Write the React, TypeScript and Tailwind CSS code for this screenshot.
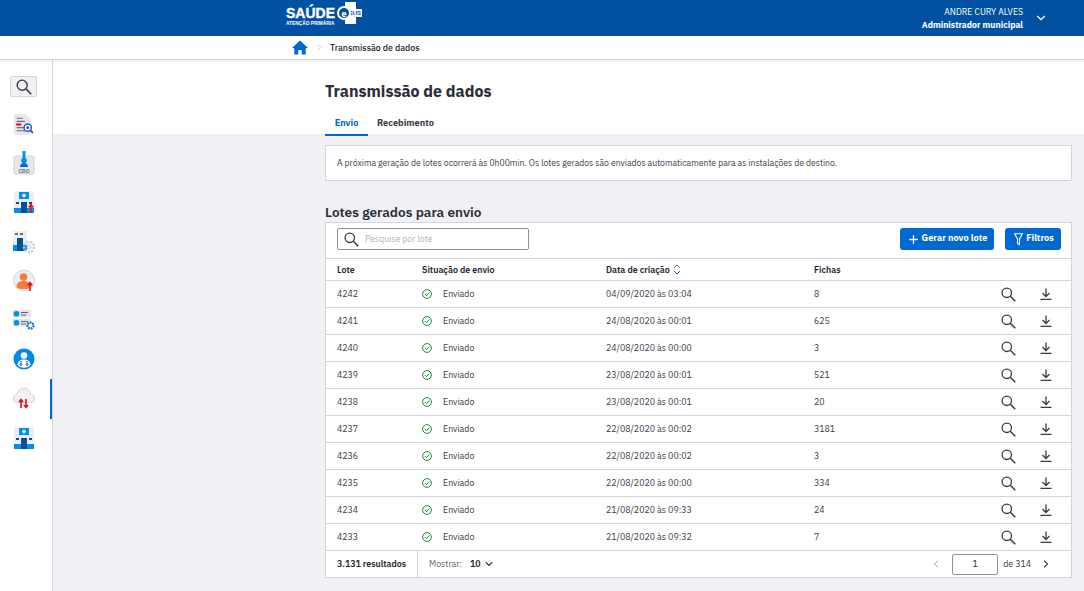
import { ChevronDown, ChevronLeft, ChevronRight, Plus } from 'lucide-react';
import type { ReactNode } from 'react';

const rows = [
  ['4242', '04/09/2020 às 03:04', '8'],
  ['4241', '24/08/2020 às 00:01', '625'],
  ['4240', '24/08/2020 às 00:00', '3'],
  ['4239', '23/08/2020 às 00:01', '521'],
  ['4238', '23/08/2020 às 00:01', '20'],
  ['4237', '22/08/2020 às 00:02', '3181'],
  ['4236', '22/08/2020 às 00:02', '3'],
  ['4235', '22/08/2020 às 00:00', '334'],
  ['4234', '21/08/2020 às 09:33', '24'],
  ['4233', '21/08/2020 às 09:32', '7'],
];

const Magnifier = ({ size = 15 }: { size?: number }) => (
  <svg width={size} height={size} viewBox="0 0 15 15" fill="none" stroke="#3a3b47">
    <circle cx="5.800" cy="5.800" r="4.700" strokeWidth="1.300" />
    <path d="m9.300 9.300 5 5" strokeWidth="1.500" />
  </svg>
);

const DownloadBar = () => (
  <svg width="12" height="12" viewBox="0 0 12 12" fill="none" stroke="#3a3b47" strokeWidth="1.300">
    <path d="M6 .5v7.500M2.500 5 6 8.500 9.500 5M.5 11.300h11" />
  </svg>
);

const Building = ({ arrow }: { arrow?: boolean }) => (
  <svg width="22" height="24" viewBox="0 0 22 24">
    <rect x="1" y="1" width="20" height="22" rx="1" fill="#eceef2" />
    <rect x="6" y="2" width="10" height="7" fill="#0090e8" />
    <path d="M11 3.500v4M9 5.500h4" stroke="#fff" strokeWidth="1.400" />
    <rect x="1" y="18" width="20" height="5" fill="#0090e8" />
    <rect x="8" y="12" width="6" height="11" fill="#0a4f96" />
    <rect x="3" y="12" width="3" height="2" fill="#0a4f96" />
    <rect x="16" y="12" width="3" height="2" fill="#0a4f96" />
    {arrow && <path d="M18 23v-8M15.800 17.500 18 14.500l2.200 3" stroke="#e0101c" strokeWidth="1.600" fill="none" />}
  </svg>
);

const sideIcons: ReactNode[] = [
  <svg key="doc" width="21" height="23" viewBox="0 0 20 22">
    <path d="M1 1h11l5 5v15H1z" fill="#e6e7ec" />
    <path d="M3.500 5h6M3.500 8h8M3.500 14h8M3.500 17h8" stroke="#6b6f7a" strokeWidth="1" />
    <rect x="3" y="10" width="5" height="2" fill="#e0101c" />
    <circle cx="14" cy="14" r="3.500" fill="#fff" stroke="#0069d0" strokeWidth="1.400" />
    <path d="m16.500 16.500 2.500 2.500" stroke="#0a4f96" strokeWidth="1.600" />
    <circle cx="14" cy="14" r="1.300" fill="#e0101c" />
  </svg>,
  <svg key="cbo" width="22" height="24" viewBox="0 0 22 24">
    <rect x="1" y="5" width="20" height="18" rx="2" fill="#e6e7ec" stroke="#d3d4dd" />
    <rect x="9.500" y="0" width="3" height="7" fill="#0090e8" />
    <circle cx="11" cy="9.500" r="2.800" fill="#0090e8" />
    <path d="M7 16c0-2.500 1.800-4 4-4s4 1.500 4 4z" fill="#0069d0" />
    <text x="11" y="21.500" textAnchor="middle" fontSize="5" fontWeight="700" fill="#6b6f7a" fontFamily="Liberation Sans, sans-serif">CBO</text>
  </svg>,
  <Building key="b1" arrow />,
  <svg key="b2" width="24" height="24" viewBox="0 0 24 24">
    <rect x="1" y="1" width="14" height="20" fill="#eceef2" />
    <rect x="3" y="3" width="3" height="2" fill="#6b6f7a" />
    <rect x="8" y="3" width="3" height="2" fill="#6b6f7a" />
    <rect x="1" y="15" width="14" height="6" fill="#0090e8" />
    <rect x="5" y="8" width="6" height="13" fill="#0a4f96" />
    <circle cx="17" cy="17" r="5" fill="none" stroke="#c9cbd4" strokeWidth="2.400" strokeDasharray="2 1.400" />
    <circle cx="17" cy="17" r="2" fill="#fff" stroke="#c9cbd4" />
  </svg>,
  <svg key="user" width="22" height="23" viewBox="0 0 22 23">
    <circle cx="11" cy="11.500" r="10.500" fill="#eceef2" stroke="#d3d4dd" />
    <circle cx="10.500" cy="8" r="3.800" fill="#f47c3c" />
    <path d="M3.500 18c0-4 3-6 7-6s7 2 7 6c-2 3-12 3-14 0z" fill="#f47c3c" />
    <path d="M17 22v-8M14.800 16.500 17 13.500l2.200 3" stroke="#e0101c" strokeWidth="1.600" fill="none" />
  </svg>,
  <svg key="cfg" width="22" height="20" viewBox="0 0 22 20">
    <rect x="0" y="0" width="18" height="7.500" rx="1" fill="#e3e4ea" />
    <rect x="0" y="9" width="18" height="7.500" rx="1" fill="#e3e4ea" />
    <circle cx="3.500" cy="3.700" r="2.800" fill="#0090e8" />
    <circle cx="3.500" cy="12.700" r="2.800" fill="#0090e8" />
    <path d="M8 2.500h7M8 5h5M8 11.500h7M8 14h5" stroke="#5f6370" strokeWidth="1" />
    <circle cx="17.500" cy="15.500" r="3" fill="#fff" stroke="#0069d0" strokeWidth="2.200" strokeDasharray="1.800 .8" />
  </svg>,
  <svg key="dr" width="22" height="22" viewBox="0 0 22 22">
    <circle cx="11" cy="11" r="10.500" fill="#0088ea" />
    <circle cx="11" cy="7.500" r="3.300" fill="#fff" />
    <path d="M4.500 17c0-4 3-5.500 6.500-5.500s6.500 1.500 6.500 5.500c-2.500 3.500-10.500 3.500-13 0z" fill="#fff" />
    <path d="M8 13v2.500M14 13v2.500" stroke="#0a4f96" strokeWidth="1" />
    <circle cx="8" cy="16.500" r="1" fill="none" stroke="#0a4f96" strokeWidth=".8" />
    <circle cx="14" cy="16.500" r="1" fill="none" stroke="#0a4f96" strokeWidth=".8" />
  </svg>,
  <svg key="cloud" width="22" height="22" viewBox="0 0 22 22">
    <path d="M5 15.500C2 15.500.5 13.500.5 11.500S2 8 4 7.800C4.500 3.500 7.500 1 11 1s6 2.500 6.500 6c2.500.3 4 2.300 4 4.500 0 2.300-1.500 4-4 4z" fill="#f0f0f5" stroke="#d3d4dd" />
    <path d="M8 21v-8M6 15l2-2.500L10 15M13 12v8M11 18l2 2.500 2-2.500" stroke="#e0101c" strokeWidth="1.600" fill="none" />
  </svg>,
  <Building key="b3" />,
];

const Logo = () => (
  <div className="mt-[2px] flex items-start self-start">
    <div className="mt-[4px] flex w-[47px] flex-col items-start text-white">
      <span className="font-['Liberation_Sans',sans-serif] text-[14px] leading-[14px] font-bold [-webkit-text-stroke:0.4px_white]">SAÚDE</span>
      <span className="font-['Liberation_Sans',sans-serif] text-[4.800px] leading-[7px] font-bold whitespace-nowrap">ATENÇÃO PRIMÁRIA</span>
    </div>
    <div className="relative ml-[4px] h-[22px] w-[25px]">
      <div className="absolute top-0 left-[8px] h-[22px] w-[11px] bg-white" />
      <div className="absolute top-[7px] left-[8px] flex h-[8px] w-[17px] items-center justify-end bg-white pr-[1px] font-['Liberation_Sans',sans-serif] text-[6px] leading-none font-bold text-[#0051a2]">SUS</div>
      <div className="absolute top-[4px] left-0 flex h-[14px] w-[14px] items-center justify-center rounded-full border-2 border-white bg-[#0051a2] text-[9px] leading-none font-bold text-white">e</div>
    </div>
  </div>
);

const App = () => {
  return (
    <div className="flex h-[591px] w-[1084px] flex-col overflow-hidden bg-white font-['IBM_Plex_Sans','Noto_Sans',sans-serif] text-[#24252e]">
      <header className="flex h-[36px] shrink-0 items-center bg-[#0051a2] pr-[36px] pl-[286px] text-white">
        <Logo />
        <div className="ml-auto flex flex-col items-end text-[8.700px] leading-[13px]">
          <span>ANDRE CURY ALVES</span>
          <span className="font-bold">Administrador municipal</span>
        </div>
        <ChevronDown className="ml-[11px] h-[14px] w-[14px]" strokeWidth={2} />
      </header>

      <nav className="z-10 flex h-[24px] shrink-0 items-center border-b border-[#d3d4dd] bg-white pl-[292px] shadow-[0_1px_2px_rgba(0,0,0,0.08)]">
        <svg width="16" height="15" viewBox="0 0 16 15" fill="#0069d0">
          <path d="M8 .5 0 8h2.300v6.500h4V10h3.400v4.500h4V8H16z" />
        </svg>
        <ChevronRight className="ml-[7px] h-[9px] w-[9px] text-[#b9bac6]" strokeWidth={2} />
        <span className="ml-[6px] text-[8.800px] font-medium text-[#24252e]">Transmissão de dados</span>
      </nav>

      <div className="flex min-h-0 flex-1">
        <aside className="flex w-[53px] shrink-0 flex-col items-center border-r border-[#d3d4dd] bg-white pt-[16px] pr-[5px]">
          <div className="mb-[7.500px] flex h-[21px] w-[27px] items-center justify-center rounded-[2px] border border-[#d3d4dd] bg-[#f0f0f5]">
            <Magnifier size={16} />
          </div>
          {sideIcons.map((icon, i) => (
            <div key={i} className="relative flex h-[39.200px] w-full items-center justify-center">
              {icon}
              {i === 7 && <span className="absolute top-0 right-[-5px] h-[40px] w-[2px] bg-[#0069d0]" />}
            </div>
          ))}
        </aside>

        <main className="min-w-0 flex-1 bg-[#f0f0f5]">
          <div className="h-[74px] bg-white pt-[21px] pl-[272px]">
            <h1 className="text-[16px] leading-[20px] font-bold text-[#2b2c36]">Transmissão de dados</h1>
            <div className="mt-[12px] flex text-[9.200px] leading-[21px] font-bold">
              <span className="w-[43px] border-b-2 border-[#0069d0] text-center text-[#0069d0]">Envio</span>
              <span className="ml-[9px] text-[#3a3b47]">Recebimento</span>
            </div>
          </div>

          <div className="pr-[12px] pl-[272px]">
            <div className="mt-[11px] flex h-[36px] items-center border border-[#d3d4dd] bg-white pl-[11px] text-[8.650px] text-[#3a3b47]">
              A próxima geração de lotes ocorrerá às 0h00min. Os lotes gerados são enviados automaticamente para as instalações de destino.
            </div>

            <h2 className="mt-[21px] text-[13.600px] leading-[20px] font-semibold text-[#2b2c36]">Lotes gerados para envio</h2>

            <section className="border border-[#d3d4dd] bg-white">
              <div className="flex h-[36px] items-center justify-between border-b border-[#d3d4dd] pr-[10px] pb-[3px] pl-[11px]">
                <div className="flex h-[22px] w-[192px] items-center rounded-[2px] border border-[#8f909e] pl-[6px]">
                  <Magnifier />
                  <span className="ml-[6px] text-[8.700px] text-[#b0b1c0]">Pesquise por lote</span>
                </div>
                <div className="flex items-center">
                  <button className="flex h-[22px] w-[94px] items-center justify-center rounded-[3px] bg-[#0069d0] text-[9.200px] font-bold text-white">
                    <Plus className="mr-[2px] h-[13px] w-[13px]" strokeWidth={2.400} />
                    Gerar novo lote
                  </button>
                  <button className="ml-[11px] flex h-[22px] w-[56px] items-center justify-center rounded-[3px] bg-[#0069d0] pl-[2px] text-[9.200px] font-bold text-white">
                    <svg className="mr-[3px]" width="9" height="13" viewBox="0 0 9 13" fill="none" stroke="#fff" strokeWidth="1.100">
                      <path d="M.6.800h7.800L5.500 6v5.500l-2-1V6z" />
                    </svg>
                    Filtros
                  </button>
                </div>
              </div>

              <div className="grid h-[22px] grid-cols-[85px_184px_208px_1fr] items-center border-b border-[#d3d4dd] pl-[11px] text-[8.900px] font-semibold">
                <span>Lote</span>
                <span>Situação de envio</span>
                <span className="flex items-center">
                  Data de criação
                  <svg className="ml-[3px]" width="8" height="11" viewBox="0 0 8 11" fill="none" strokeWidth="1">
                    <path d="m1 4 3-3 3 3" stroke="#6b6f7a" />
                    <path d="m1 7 3 3 3-3" stroke="#0069d0" />
                  </svg>
                </span>
                <span>Fichas</span>
              </div>

              {rows.map(([lote, data, fichas]) => (
                <div key={lote} className="grid h-[27px] grid-cols-[85px_184px_208px_1fr_39px_31px] items-center border-b border-[#d3d4dd] pl-[11px] text-[8.800px] text-[#3a3b47]">
                  <span>{lote}</span>
                  <span className="flex items-center">
                    <svg width="10" height="10" viewBox="0 0 10 10" fill="none" stroke="#1a8a3c" strokeWidth="1">
                      <circle cx="5" cy="5" r="4.400" />
                      <path d="m2.800 5 1.600 1.600 2.900-3" />
                    </svg>
                    <span className="ml-[11px]">Enviado</span>
                  </span>
                  <span>{data}</span>
                  <span>{fichas}</span>
                  <Magnifier />
                  <DownloadBar />
                </div>
              ))}

              <div className="flex h-[26px] items-center text-[8.800px]">
                <span className="flex h-full w-[92px] items-center border-r border-[#d3d4dd] pl-[11px] font-semibold">3.131 resultados</span>
                <span className="ml-[11px] text-[#5f6370]">Mostrar:</span>
                <span className="ml-[8px] font-semibold">10</span>
                <ChevronDown className="ml-[2px] h-[12px] w-[12px] text-[#3a3b47]" strokeWidth={2.200} />
                <ChevronLeft className="ml-auto h-[12px] w-[12px] text-[#9d9eac]" strokeWidth={2} />
                <span className="ml-[10px] flex h-[21px] w-[46px] items-center justify-center rounded-[2px] border border-[#8f909e] text-[#24252e]">1</span>
                <span className="ml-[5px] text-[#3a3b47]">de 314</span>
                <ChevronRight className="mr-[19px] ml-[9px] h-[12px] w-[12px] text-[#3a3b47]" strokeWidth={2.200} />
              </div>
            </section>
          </div>
        </main>
      </div>
    </div>
  );
};

export default App;
